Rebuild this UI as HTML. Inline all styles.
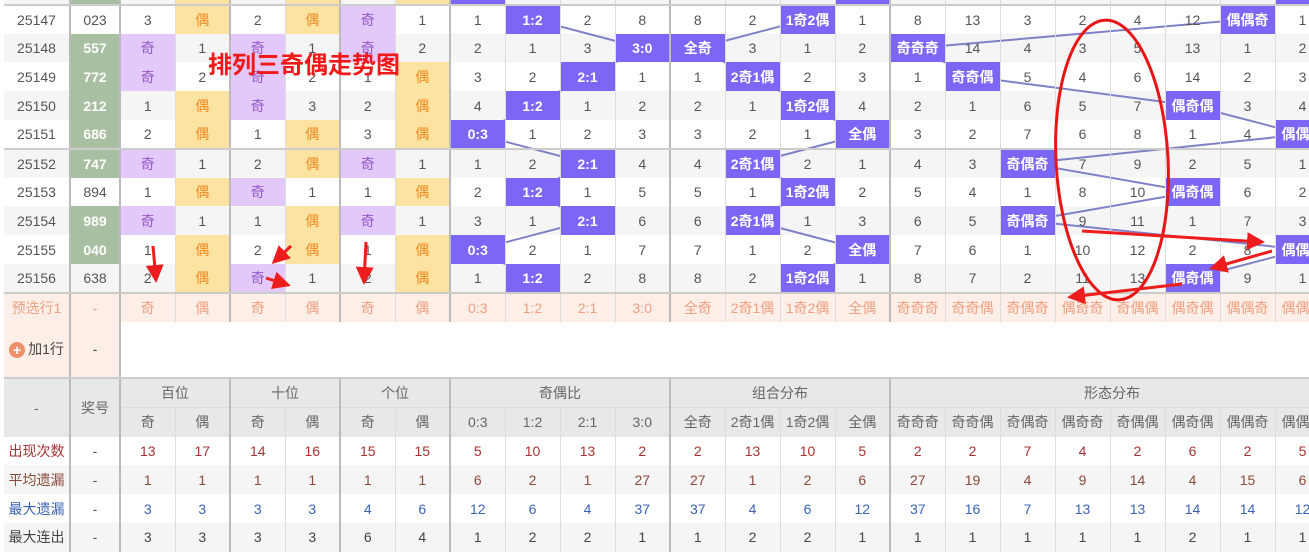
<!DOCTYPE html>
<html><head><meta charset="utf-8">
<style>
*{margin:0;padding:0;box-sizing:border-box}
body{width:1309px;height:555px;overflow:hidden;background:#fff;position:relative;font-family:"Liberation Sans","Noto Sans CJK SC",sans-serif;font-size:14px;color:#555}
#stripe{position:absolute;left:4px;top:-24px;width:1330px;height:316.8px;background:repeating-linear-gradient(#f5f5f5 0,#f5f5f5 28.8px,#fff 28.8px,#fff 57.6px);z-index:0}
#lines{position:absolute;left:0;top:0;z-index:1}
#t{position:absolute;left:4px;top:-24px;width:1326px;border-collapse:collapse;table-layout:fixed;z-index:2}
#t td{text-align:center;vertical-align:middle;padding:0;white-space:nowrap;overflow:hidden}
col{border-right:1px solid #ddd}
col.g{border-right:2px solid #bbb}
tr.d td{height:28.8px}
tr.blk td{border-top:2px solid #ccc}
td.q{background:#e2c9fa;color:#9558c8}
td.o{background:#fde3a1;color:#ee8a22}
td.p{background:#7b66f5;color:#fff;font-weight:bold}
td.n{background:#a8bfa1;color:#fff;font-weight:bold}
tr.pre td{background:#fdeee8;color:#f0a080;height:28.8px;border-top:2px solid #ccc}
tr.add td{height:56px}
tr.add td.pk{background:#fdeee8;color:#444}
tr.h td{background:#e8e8e8;color:#666;height:29.5px;border-top:2px solid #ccc}
tr.h2 td{background:#e8e8e8;color:#666;height:29.5px;border-top:1px solid #ddd}
tr.s td{height:28.8px}
tr.s.gr td{background:#f5f5f5}
tr.c1 td{color:#a83232}
tr.c2 td{color:#8a4a3a}
tr.c3 td{color:#3a64b4}
tr.c4 td{color:#444}
tr.s td.lb{text-align:left;padding-left:6px}
.plus{display:inline-block;width:16px;height:16px;border-radius:50%;background:#f0906a;color:#fff;font-size:14px;line-height:16px;font-weight:bold;vertical-align:middle;margin-right:3px}
#ov{position:absolute;left:0;top:0;z-index:5}
#title{position:absolute;left:208px;top:45px;color:#f01818;font-weight:bold;font-size:24px;z-index:6;font-family:"Noto Sans CJK SC",sans-serif}
</style></head><body>
<div id="stripe"></div>
<svg id="lines" width="1309" height="300">
<g stroke="#8080c8" stroke-width="2" fill="none">
<polyline points="477.5,-9.6 532.5,19.2 642.5,48 587.5,76.8 532.5,105.6 477.5,134.4 587.5,163.2 532.5,192 587.5,220.8 477.5,249.6 532.5,278.4"/>
<polyline points="862.5,-9.6 807.5,19.2 697.5,48 752.5,76.8 807.5,105.6 862.5,134.4 752.5,163.2 807.5,192 752.5,220.8 862.5,249.6 807.5,278.4"/>
<polyline points="1302.5,-9.6 1247.5,19.2 917.5,48 972.5,76.8 1192.5,105.6 1302.5,134.4 1027.5,163.2 1192.5,192 1027.5,220.8 1302.5,249.6 1192.5,278.4"/>
</g></svg>
<table id="t">
<colgroup><col style="width:66px" class="g"><col style="width:50px" class="g"><col style="width:55px"><col style="width:55px" class="g"><col style="width:55px"><col style="width:55px" class="g"><col style="width:55px"><col style="width:55px" class="g"><col style="width:55px"><col style="width:55px"><col style="width:55px"><col style="width:55px" class="g"><col style="width:55px"><col style="width:55px"><col style="width:55px"><col style="width:55px" class="g"><col style="width:55px"><col style="width:55px"><col style="width:55px"><col style="width:55px"><col style="width:55px"><col style="width:55px"><col style="width:55px"><col style="width:55px"></colgroup>
<tr class="d"><td>25146</td><td class="n">000</td><td>1</td><td class="o">偶</td><td>1</td><td class="o">偶</td><td>1</td><td class="o">偶</td><td class="p">0:3</td><td>1</td><td>1</td><td>7</td><td>7</td><td>1</td><td>1</td><td class="p">全偶</td><td>7</td><td>12</td><td>2</td><td>1</td><td>3</td><td>11</td><td>1</td><td class="p">偶偶偶</td></tr>
<tr class="d blk"><td>25147</td><td>023</td><td>3</td><td class="o">偶</td><td>2</td><td class="o">偶</td><td class="q">奇</td><td>1</td><td>1</td><td class="p">1:2</td><td>2</td><td>8</td><td>8</td><td>2</td><td class="p">1奇2偶</td><td>1</td><td>8</td><td>13</td><td>3</td><td>2</td><td>4</td><td>12</td><td class="p">偶偶奇</td><td>1</td></tr>
<tr class="d"><td>25148</td><td class="n">557</td><td class="q">奇</td><td>1</td><td class="q">奇</td><td>1</td><td class="q">奇</td><td>2</td><td>2</td><td>1</td><td>3</td><td class="p">3:0</td><td class="p">全奇</td><td>3</td><td>1</td><td>2</td><td class="p">奇奇奇</td><td>14</td><td>4</td><td>3</td><td>5</td><td>13</td><td>1</td><td>2</td></tr>
<tr class="d"><td>25149</td><td class="n">772</td><td class="q">奇</td><td>2</td><td class="q">奇</td><td>2</td><td>1</td><td class="o">偶</td><td>3</td><td>2</td><td class="p">2:1</td><td>1</td><td>1</td><td class="p">2奇1偶</td><td>2</td><td>3</td><td>1</td><td class="p">奇奇偶</td><td>5</td><td>4</td><td>6</td><td>14</td><td>2</td><td>3</td></tr>
<tr class="d"><td>25150</td><td class="n">212</td><td>1</td><td class="o">偶</td><td class="q">奇</td><td>3</td><td>2</td><td class="o">偶</td><td>4</td><td class="p">1:2</td><td>1</td><td>2</td><td>2</td><td>1</td><td class="p">1奇2偶</td><td>4</td><td>2</td><td>1</td><td>6</td><td>5</td><td>7</td><td class="p">偶奇偶</td><td>3</td><td>4</td></tr>
<tr class="d"><td>25151</td><td class="n">686</td><td>2</td><td class="o">偶</td><td>1</td><td class="o">偶</td><td>3</td><td class="o">偶</td><td class="p">0:3</td><td>1</td><td>2</td><td>3</td><td>3</td><td>2</td><td>1</td><td class="p">全偶</td><td>3</td><td>2</td><td>7</td><td>6</td><td>8</td><td>1</td><td>4</td><td class="p">偶偶偶</td></tr>
<tr class="d blk"><td>25152</td><td class="n">747</td><td class="q">奇</td><td>1</td><td>2</td><td class="o">偶</td><td class="q">奇</td><td>1</td><td>1</td><td>2</td><td class="p">2:1</td><td>4</td><td>4</td><td class="p">2奇1偶</td><td>2</td><td>1</td><td>4</td><td>3</td><td class="p">奇偶奇</td><td>7</td><td>9</td><td>2</td><td>5</td><td>1</td></tr>
<tr class="d"><td>25153</td><td>894</td><td>1</td><td class="o">偶</td><td class="q">奇</td><td>1</td><td>1</td><td class="o">偶</td><td>2</td><td class="p">1:2</td><td>1</td><td>5</td><td>5</td><td>1</td><td class="p">1奇2偶</td><td>2</td><td>5</td><td>4</td><td>1</td><td>8</td><td>10</td><td class="p">偶奇偶</td><td>6</td><td>2</td></tr>
<tr class="d"><td>25154</td><td class="n">989</td><td class="q">奇</td><td>1</td><td>1</td><td class="o">偶</td><td class="q">奇</td><td>1</td><td>3</td><td>1</td><td class="p">2:1</td><td>6</td><td>6</td><td class="p">2奇1偶</td><td>1</td><td>3</td><td>6</td><td>5</td><td class="p">奇偶奇</td><td>9</td><td>11</td><td>1</td><td>7</td><td>3</td></tr>
<tr class="d"><td>25155</td><td class="n">040</td><td>1</td><td class="o">偶</td><td>2</td><td class="o">偶</td><td>1</td><td class="o">偶</td><td class="p">0:3</td><td>2</td><td>1</td><td>7</td><td>7</td><td>1</td><td>2</td><td class="p">全偶</td><td>7</td><td>6</td><td>1</td><td>10</td><td>12</td><td>2</td><td>8</td><td class="p">偶偶偶</td></tr>
<tr class="d"><td>25156</td><td>638</td><td>2</td><td class="o">偶</td><td class="q">奇</td><td>1</td><td>2</td><td class="o">偶</td><td>1</td><td class="p">1:2</td><td>2</td><td>8</td><td>8</td><td>2</td><td class="p">1奇2偶</td><td>1</td><td>8</td><td>7</td><td>2</td><td>11</td><td>13</td><td class="p">偶奇偶</td><td>9</td><td>1</td></tr>
<tr class="pre"><td>预选行1</td><td>-</td><td>奇</td><td>偶</td><td>奇</td><td>偶</td><td>奇</td><td>偶</td><td>0:3</td><td>1:2</td><td>2:1</td><td>3:0</td><td>全奇</td><td>2奇1偶</td><td>1奇2偶</td><td>全偶</td><td>奇奇奇</td><td>奇奇偶</td><td>奇偶奇</td><td>偶奇奇</td><td>奇偶偶</td><td>偶奇偶</td><td>偶偶奇</td><td>偶偶偶</td></tr>
<tr class="add"><td class="pk"><span class="plus">+</span>加1行</td><td class="pk">-</td><td colspan="22" style="background:#fff"></td></tr>
<tr class="h"><td rowspan="2">-</td><td rowspan="2">奖号</td><td colspan="2">百位</td><td colspan="2">十位</td><td colspan="2">个位</td><td colspan="4">奇偶比</td><td colspan="4">组合分布</td><td colspan="8" style="text-align:left;padding-left:193px">形态分布</td></tr>
<tr class="h2"><td>奇</td><td>偶</td><td>奇</td><td>偶</td><td>奇</td><td>偶</td><td>0:3</td><td>1:2</td><td>2:1</td><td>3:0</td><td>全奇</td><td>2奇1偶</td><td>1奇2偶</td><td>全偶</td><td>奇奇奇</td><td>奇奇偶</td><td>奇偶奇</td><td>偶奇奇</td><td>奇偶偶</td><td>偶奇偶</td><td>偶偶奇</td><td>偶偶偶</td></tr>
<tr class="s c1"><td class="lb">出现次数</td><td style="color:#555">-</td><td>13</td><td>17</td><td>14</td><td>16</td><td>15</td><td>15</td><td>5</td><td>10</td><td>13</td><td>2</td><td>2</td><td>13</td><td>10</td><td>5</td><td>2</td><td>2</td><td>7</td><td>4</td><td>2</td><td>6</td><td>2</td><td>5</td></tr>
<tr class="s gr c2"><td class="lb">平均遗漏</td><td style="color:#555">-</td><td>1</td><td>1</td><td>1</td><td>1</td><td>1</td><td>1</td><td>6</td><td>2</td><td>1</td><td>27</td><td>27</td><td>1</td><td>2</td><td>6</td><td>27</td><td>19</td><td>4</td><td>9</td><td>14</td><td>4</td><td>15</td><td>6</td></tr>
<tr class="s c3"><td class="lb">最大遗漏</td><td style="color:#555">-</td><td>3</td><td>3</td><td>3</td><td>3</td><td>4</td><td>6</td><td>12</td><td>6</td><td>4</td><td>37</td><td>37</td><td>4</td><td>6</td><td>12</td><td>37</td><td>16</td><td>7</td><td>13</td><td>13</td><td>14</td><td>14</td><td>12</td></tr>
<tr class="s gr c4"><td class="lb">最大连出</td><td style="color:#555">-</td><td>3</td><td>3</td><td>3</td><td>3</td><td>6</td><td>4</td><td>1</td><td>2</td><td>2</td><td>1</td><td>1</td><td>2</td><td>2</td><td>1</td><td>1</td><td>1</td><td>1</td><td>1</td><td>1</td><td>2</td><td>1</td><td>1</td></tr>
</table>
<div id="title">排列三奇偶走势图</div>
<svg id="ov" width="1309" height="555">
<defs><marker id="ah" markerWidth="6" markerHeight="6" refX="5" refY="3" orient="auto"><path d="M0,0 L6,3 L0,6 Z" fill="#ee1c1c"/></marker></defs>
<ellipse cx="1112" cy="160" rx="56" ry="140" fill="none" stroke="#e81515" stroke-width="3" transform="rotate(-3 1112 160)"/>
<g stroke="#ee1c1c" stroke-width="3" fill="none" marker-end="url(#ah)">
<line x1="153" y1="246" x2="156" y2="280"/>
<line x1="291" y1="246" x2="274" y2="262"/>
<line x1="266" y1="278" x2="288" y2="285"/>
<line x1="366" y1="242" x2="364" y2="282"/>
<line x1="1082" y1="231" x2="1262" y2="242"/>
<line x1="1272" y1="251" x2="1212" y2="268"/>
<line x1="1182" y1="284" x2="1070" y2="297"/>
</g></svg>
</body></html>
